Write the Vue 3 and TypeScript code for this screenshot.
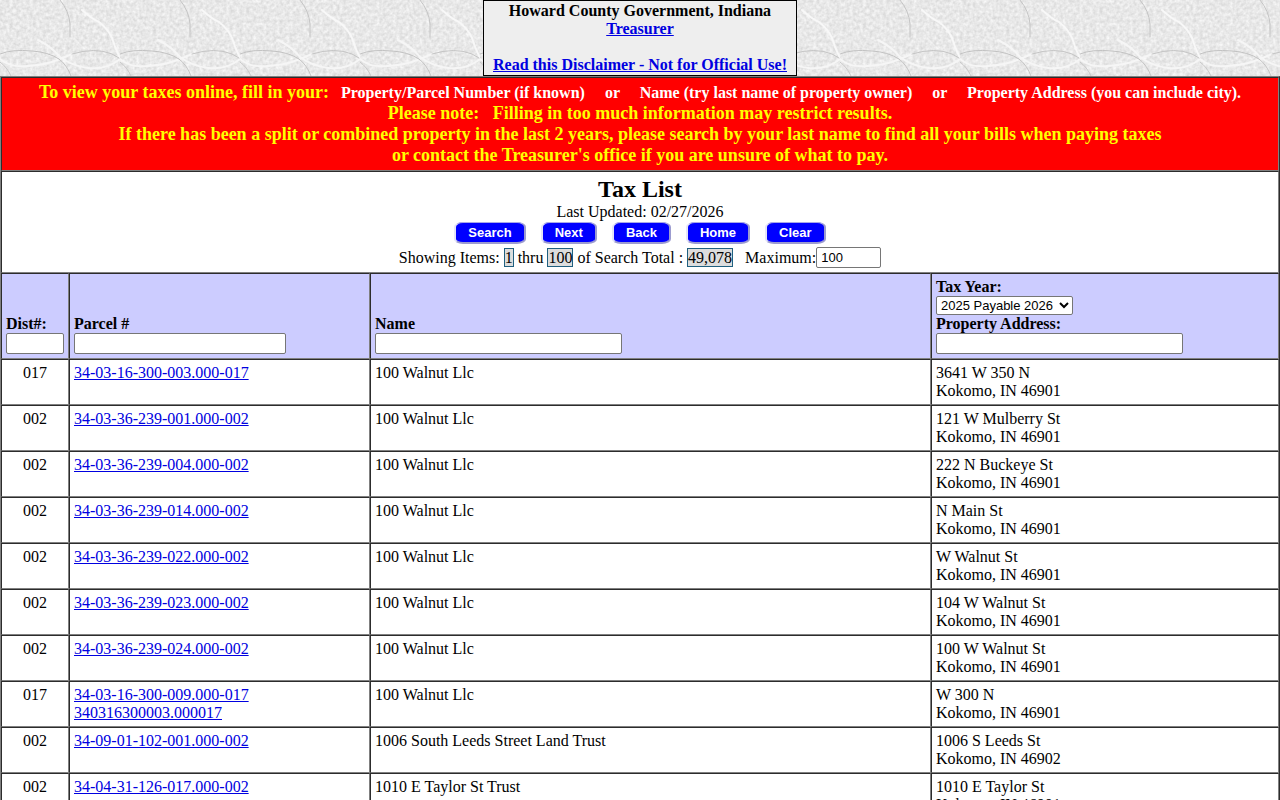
<script setup lang="ts">
import { ref } from 'vue'

interface TaxRow {
  district: string
  parcels: string[]
  name: string
  street: string
  city: string
}

const rows: TaxRow[] = [
  { district: '017', parcels: ['34-03-16-300-003.000-017'], name: '100 Walnut Llc', street: '3641 W 350 N', city: 'Kokomo, IN 46901' },
  { district: '002', parcels: ['34-03-36-239-001.000-002'], name: '100 Walnut Llc', street: '121 W Mulberry St', city: 'Kokomo, IN 46901' },
  { district: '002', parcels: ['34-03-36-239-004.000-002'], name: '100 Walnut Llc', street: '222 N Buckeye St', city: 'Kokomo, IN 46901' },
  { district: '002', parcels: ['34-03-36-239-014.000-002'], name: '100 Walnut Llc', street: 'N Main St', city: 'Kokomo, IN 46901' },
  { district: '002', parcels: ['34-03-36-239-022.000-002'], name: '100 Walnut Llc', street: 'W Walnut St', city: 'Kokomo, IN 46901' },
  { district: '002', parcels: ['34-03-36-239-023.000-002'], name: '100 Walnut Llc', street: '104 W Walnut St', city: 'Kokomo, IN 46901' },
  { district: '002', parcels: ['34-03-36-239-024.000-002'], name: '100 Walnut Llc', street: '100 W Walnut St', city: 'Kokomo, IN 46901' },
  { district: '017', parcels: ['34-03-16-300-009.000-017', '340316300003.000017'], name: '100 Walnut Llc', street: 'W 300 N', city: 'Kokomo, IN 46901' },
  { district: '002', parcels: ['34-09-01-102-001.000-002'], name: '1006 South Leeds Street Land Trust', street: '1006 S Leeds St', city: 'Kokomo, IN 46902' },
  { district: '002', parcels: ['34-04-31-126-017.000-002'], name: '1010 E Taylor St Trust', street: '1010 E Taylor St', city: 'Kokomo, IN 46901' },
]

const actions = ['Search', 'Next', 'Back', 'Home', 'Clear']
const maximum = ref('100')
const district = ref('')
const parcel = ref('')
const owner = ref('')
const address = ref('')
const year = ref('2025')
</script>

<template>
  <div class="page">
    <header class="masthead">
      <svg class="paper" width="100%" height="100%" aria-hidden="true">
        <defs>
          <filter id="grain" x="0" y="0" width="100%" height="100%" color-interpolation-filters="sRGB">
            <feTurbulence type="fractalNoise" baseFrequency="0.3" numOctaves="2" seed="4" />
            <feColorMatrix type="matrix" values="0.18 0 0 0 0.82  0.18 0 0 0 0.82  0.18 0 0 0 0.82  0 0 0 0 1" />
          </filter>
          <pattern id="creases" width="120" height="120" patternUnits="userSpaceOnUse">
            <g fill="none" stroke-linecap="round">
              <path d="M82 10Q92 19 99 22Q108 29 112 38Q115 48 120 58" stroke="#f8f8f8" stroke-width="2" />
              <path d="M38 40Q52 47 60 57Q72 66 88 68Q107 70 120 59" stroke="#f6f6f6" stroke-width="2" />
              <path d="M0 59Q10 68 28 66Q46 65 60 59L72 54" stroke="#f6f6f6" stroke-width="2" />
              <path d="M0 62Q7 67 11 76" stroke="#c8c8c8" stroke-width="1" />
              <path d="M60 0Q69 11 70 24L70 37" stroke="#c4c4c4" stroke-width="1" />
              <path d="M0 54Q12 49 32 51Q48 52 59 59" stroke="#c2c2c2" stroke-width="1" />
              <path d="M59 59Q67 65 71 76" stroke="#c4c4c4" stroke-width="1" />
              <path d="M72 54Q95 47 112 54L119 58" stroke="#c4c4c4" stroke-width="1" />
            </g>
          </pattern>
        </defs>
        <rect width="100%" height="100%" filter="url(#grain)" />
        <rect width="100%" height="100%" fill="url(#creases)" />
      </svg>
      <div class="office">
        Howard County Government, Indiana<br />
        <a href="#">Treasurer</a><br /><br />
        <a href="#">Read this Disclaimer - Not for Official Use!</a>
      </div>
    </header>

    <table class="taxes">
      <colgroup>
        <col class="col-dist" />
        <col class="col-parcel" />
        <col />
        <col class="col-address" />
      </colgroup>
      <tbody>
        <tr>
          <td colspan="4" class="notice">
            To view your taxes online, fill in your:<span class="fields"> &nbsp; Property/Parcel Number (if known) &nbsp;&nbsp;&nbsp; or &nbsp;&nbsp;&nbsp; Name (try last name of property owner) &nbsp;&nbsp;&nbsp; or &nbsp;&nbsp;&nbsp; Property Address (you can include city).</span><br />
            Please note: &nbsp; Filling in too much information may restrict results.<br />
            If there has been a split or combined property in the last 2 years, please search by your last name to find all your bills when paying taxes<br />
            or contact the Treasurer's office if you are unsure of what to pay.
          </td>
        </tr>
        <tr>
          <td colspan="4" class="summary">
            <h1>Tax List</h1>
            <div>Last Updated: 02/27/2026</div>
            <div class="actions">
              <button v-for="action in actions" :key="action" type="button">{{ action }}</button>
            </div>
            <div class="showing">
              <span>Showing Items: <span class="count">1</span> thru <span class="count">100</span> of Search Total : <span class="count">49,078</span> &nbsp; </span>
              <label for="maximum">Maximum:</label>
              <input id="maximum" v-model="maximum" type="text" class="max" />
            </div>
          </td>
        </tr>
        <tr class="filters">
          <th scope="col">
            <label for="district">Dist#:</label>
            <input id="district" v-model="district" type="text" />
          </th>
          <th scope="col">
            <label for="parcel">Parcel #</label>
            <input id="parcel" v-model="parcel" type="text" class="medium" />
          </th>
          <th scope="col">
            <label for="owner">Name</label>
            <input id="owner" v-model="owner" type="text" class="wide" />
          </th>
          <th scope="col">
            <label for="year">Tax Year:</label>
            <select id="year" v-model="year">
              <option value="2025">2025 Payable 2026</option>
            </select>
            <label for="address">Property Address:</label>
            <input id="address" v-model="address" type="text" class="wide" />
          </th>
        </tr>
        <tr v-for="row in rows" :key="row.parcels[0]">
          <td class="district">{{ row.district }}</td>
          <td>
            <template v-for="(number, i) in row.parcels" :key="number"><br v-if="i > 0" /><a href="#">{{ number }}</a></template>
          </td>
          <td>{{ row.name }}</td>
          <td>{{ row.street }}<br />{{ row.city }}</td>
        </tr>
      </tbody>
    </table>
  </div>
</template>

<style>
body {
  margin: 0;
  background: #fff;
}
</style>

<style scoped>
.page {
  font: 16px/18px "Liberation Serif", "Times New Roman", serif;
  color: #000;
}
a {
  color: #0000e0;
}
.masthead {
  position: relative;
  display: flex;
  justify-content: center;
  background: #e6e6e6;
}
.paper {
  position: absolute;
  inset: 0;
}
.office {
  position: relative;
  padding: 1px 9px;
  border: 1px solid #000;
  background: #eee;
  font-weight: bold;
  text-align: center;
}
.taxes {
  width: 100%;
  table-layout: fixed;
  border: 1px outset #808080;
  border-spacing: 0;
}
.col-dist {
  width: 68px;
}
.col-parcel {
  width: 301px;
}
.col-address {
  width: 348px;
}
td,
th {
  padding: 4px;
  border: 1px inset #808080;
  text-align: left;
  vertical-align: top;
}
td.notice {
  background: #f00;
  color: #ff0;
  font-size: 18px;
  line-height: 21px;
  font-weight: bold;
  text-align: center;
}
.fields {
  color: #fff;
  font-size: 16px;
}
td.summary {
  text-align: center;
}
h1 {
  margin: 0;
  font-size: 24px;
  line-height: 27px;
}
.actions {
  display: flex;
  justify-content: center;
  gap: 15px;
  padding: 1px 0 3px;
}
button {
  height: 22px;
  padding: 0 12px;
  border: solid;
  border-width: 1px 2px 2px;
  border-color: #a8a8e8 #9c9cd0 #9c9cd0 #e4e4f8;
  border-radius: 9px / 5px;
  background: #00f;
  color: #fff;
  font: bold 13px/19px "Liberation Sans", Arial, sans-serif;
}
.showing {
  display: flex;
  justify-content: center;
  align-items: center;
}
.showing > span {
  white-space: pre-wrap;
}
.count {
  border: 1px solid #1f6080;
  background: #ddd;
}
input,
select {
  box-sizing: border-box;
  border: 1px solid #767676;
  border-radius: 2px;
  background: #fff;
  color: #000;
  font: 13px "Liberation Sans", Arial, sans-serif;
}
input {
  height: 21px;
  padding: 1px 4px;
}
.max {
  width: 65px;
}
.filters th {
  background: #ccf;
  vertical-align: bottom;
}
.filters label,
.filters input,
.filters select {
  display: block;
}
.filters input {
  width: 58px;
}
.filters input.medium {
  width: 212px;
}
.filters input.wide {
  width: 247px;
}
select {
  width: 137px;
  height: 19px;
}
td.district {
  text-align: center;
}
</style>
